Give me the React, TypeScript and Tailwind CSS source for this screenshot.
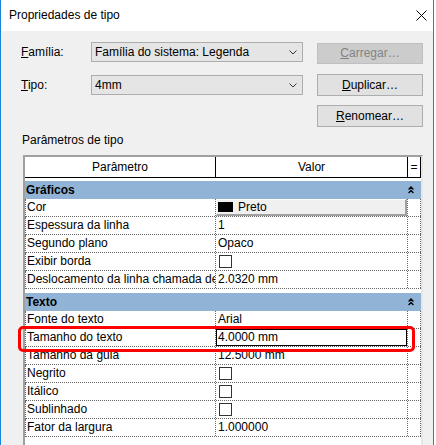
import type { ReactNode } from "react";

const font = "font-['Liberation_Sans',Arial,sans-serif]";

function Chevron() {
  return (
    <svg width="8" height="5" viewBox="0 0 8 5" className="shrink-0">
      <polyline points="0.5,0.5 4,4 7.5,0.5" fill="none" stroke="#333" strokeWidth="1" />
    </svg>
  );
}

function Collapse() {
  return (
    <svg width="6" height="8" viewBox="0 0 6 8">
      <polyline points="0.6,3.4 3,1 5.4,3.4" fill="none" stroke="#000" strokeWidth="1.4" />
      <polyline points="0.6,7 3,4.6 5.4,7" fill="none" stroke="#000" strokeWidth="1.4" />
    </svg>
  );
}

function Select({ value }: { value: string }) {
  return (
    <div className="flex h-[20px] w-[212px] items-center justify-between border border-[#adadad] bg-[#e5e5e5] pl-[3px] pr-[5px]">
      <span>{value}</span>
      <Chevron />
    </div>
  );
}

function Button({ children, disabled, className = "" }: { children: ReactNode; disabled?: boolean; className?: string }) {
  return (
    <div
      className={
        disabled
          ? `flex w-[106px] items-center justify-center border border-[#bfbfbf] bg-[#cccccc] text-[#838383] ${className}`
          : `flex w-[106px] items-center justify-center border border-[#adadad] bg-[#e1e1e1] ${className}`
      }
    >
      {children}
    </div>
  );
}

function Group({ title, className = "" }: { title: string; className?: string }) {
  return (
    <div className={`flex h-[18px] items-center justify-between bg-[#91b4d6] pl-[1px] pr-[7px] font-bold ${className}`}>
      <span>{title}</span>
      <Collapse />
    </div>
  );
}

function Row({ label, children }: { label: string; children?: ReactNode }) {
  return (
    <div className="grid h-[18px] grid-cols-[190px_192px_13px] border-b border-l border-dotted border-[#666]">
      <div className="flex items-center overflow-hidden whitespace-nowrap border-r border-dotted border-[#666] pl-[1px]">
        {label}
      </div>
      <div className="flex items-center overflow-hidden whitespace-nowrap border-r border-dotted border-[#666]">
        {children}
      </div>
      <div className="border-r border-dotted border-[#666]" />
    </div>
  );
}

function Text({ children }: { children: ReactNode }) {
  return <span className="pl-[2px]">{children}</span>;
}

function Check() {
  return (
    <div className="ml-[3px] h-[13px] w-[13px] border border-[#333] bg-white" />
  );
}

export default function App() {
  return (
    <div className={`relative h-[445px] w-[436px] overflow-hidden bg-white text-[12px] leading-[15px] text-black ${font}`}>
      <div className="flex h-full w-[434px] flex-col border-x border-[#1883d7]">
        {/* barra de título */}
        <div className="flex h-[31px] shrink-0 items-center justify-between bg-white pl-[8px] pr-[6px]">
          <span>Propriedades de tipo</span>
          <svg width="11" height="11" viewBox="0 0 11 11">
            <path d="M0.5 0.5 L10.5 10.5 M10.5 0.5 L0.5 10.5" stroke="#000" strokeWidth="1" />
          </svg>
        </div>

        <div className="flex flex-1 flex-col bg-[#f0f0f0] pl-[20px] pt-[11px]">
          <div className="flex h-[22px] items-start">
            <div className="flex h-[20px] w-[70px] items-center">
              <span><span className="underline">F</span>amília:</span>
            </div>
            <Select value="Família do sistema: Legenda" />
            <Button disabled className="ml-[14px] mt-[1px] h-[21px]">
              <span><span className="underline">C</span>arregar…</span>
            </Button>
          </div>

          <div className="mt-[10px] flex h-[22px] items-start">
            <div className="mt-[1px] flex h-[20px] w-[70px] items-center">
              <span><span className="underline">T</span>ipo:</span>
            </div>
            <div className="mt-[1px]">
              <Select value="4mm" />
            </div>
            <Button className="ml-[14px] h-[22px]">
              <span><span className="underline">D</span>uplicar…</span>
            </Button>
          </div>

          <div className="mt-[9px] flex h-[22px]">
            <Button className="ml-[296px] h-[22px]">
              <span><span className="underline">R</span>enomear…</span>
            </Button>
          </div>

          <div className="ml-[1px] mt-[6px]">Parâmetros de tipo</div>

          <div className="ml-[2px] mt-[7px] h-[300px] w-[400px] border-l-2 border-r-2 border-t-2 border-[#a0a0a0] border-r-[#e6e6e6] bg-white">
            <div className="grid h-[21px] grid-cols-[191px_192px_13px] border-b border-black">
              <div className="flex items-center justify-center border-r border-black">Parâmetro</div>
              <div className="flex items-center justify-center border-r border-black">Valor</div>
              <div className="flex items-center justify-center border-r border-black">=</div>
            </div>

            <Group title="Gráficos" className="mt-[3px]" />
            <Row label="Cor">
              <div className="flex h-full w-full items-center border-b-2 border-l border-r-2 border-t border-b-[#a0a0a0] border-l-white border-r-[#a0a0a0] border-t-white bg-[#f0f0f0]">
                <div className="ml-[1px] h-[10px] w-[15px] bg-black" />
                <span className="ml-[5px]">Preto</span>
              </div>
            </Row>
            <Row label="Espessura da linha"><Text>1</Text></Row>
            <Row label="Segundo plano"><Text>Opaco</Text></Row>
            <Row label="Exibir borda"><Check /></Row>
            <Row label="Deslocamento da linha chamada de"><Text>2.0320 mm</Text></Row>

            <Group title="Texto" className="mt-[4px]" />
            <Row label="Fonte do texto"><Text>Arial</Text></Row>
            <Row label="Tamanho do texto">
              <div className="flex h-full w-full items-center border border-black bg-white pl-[1px]">4.0000 mm</div>
            </Row>
            <Row label="Tamanho da guia"><Text>12.5000 mm</Text></Row>
            <Row label="Negrito"><Check /></Row>
            <Row label="Itálico"><Check /></Row>
            <Row label="Sublinhado"><Check /></Row>
            <Row label="Fator da largura"><Text>1.000000</Text></Row>
          </div>
        </div>
      </div>

      {/* destaque vermelho */}
      <div className="pointer-events-none absolute left-[18px] top-[326px] h-[26px] w-[397px] rounded-[5px] border-[3px] border-[#ff0000]" />
    </div>
  );
}
